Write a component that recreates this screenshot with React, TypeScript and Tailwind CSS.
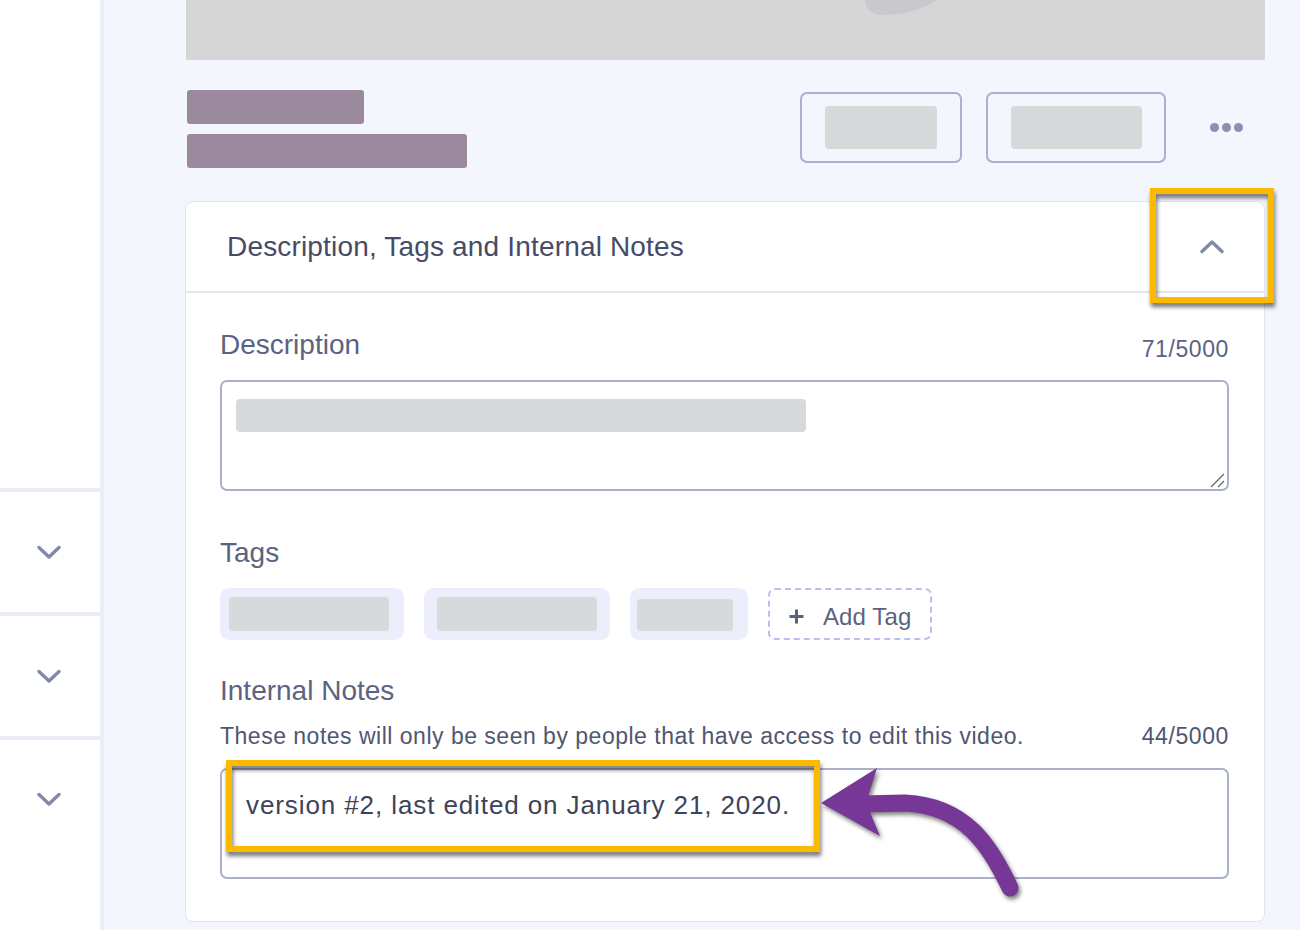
import React from "react";

function Chevron({ up = false }: { up?: boolean }) {
  return (
    <svg width="24" height="15" viewBox="0 0 24 15" fill="none">
      <polyline
        points={up ? "2,12.5 12,3 22,12.5" : "2,2.5 12,12 22,2.5"}
        stroke="#8189ab"
        strokeWidth="3.4"
        strokeLinecap="round"
        strokeLinejoin="round"
      />
    </svg>
  );
}

function Sidebar() {
  return (
    <div className="w-[104px] shrink-0 bg-[#e9eef7] pr-[4px] flex flex-col gap-[4px]">
      <div className="h-[488px] bg-white" />
      <div className="h-[120px] bg-white flex items-center justify-center pr-[3px]">
        <Chevron />
      </div>
      <div className="h-[120px] bg-white flex items-center justify-center pr-[3px]">
        <Chevron />
      </div>
      <div className="flex-1 bg-white flex justify-center pt-[52px] pr-[3px]">
        <Chevron />
      </div>
    </div>
  );
}

function GreyBar({ w, h = 34 }: { w: number; h?: number }) {
  return <div className="bg-[#d8d9db] rounded-[4px]" style={{ width: w, height: h }} />;
}

export default function App() {
  return (
    <div className="relative w-[1300px] h-[930px] overflow-hidden flex bg-[#f3f6fd] font-['Liberation_Sans',Arial,sans-serif]">
      <Sidebar />

      <main className="flex-1 pl-[81px] pr-[35px]">
        {/* video preview */}
        <div className="relative ml-px h-[60px] bg-[#d6d6d6]">
          <svg className="absolute left-[679px] top-0" width="72" height="16" viewBox="0 0 72 16">
            <path d="M0 0 L72 0 C60 8 42 15 18 15 C5 15 1 8 0 0 Z" fill="#c9c8cc" />
          </svg>
        </div>

        {/* title + actions */}
        <div className="mt-[30px] flex items-center">
          <div className="flex flex-col gap-[10px] pl-[2px]">
            <div className="w-[177px] h-[34px] rounded-[3px] bg-[#9b8a9e]" />
            <div className="w-[280px] h-[34px] rounded-[3px] bg-[#9b8a9e]" />
          </div>
          <div className="ml-auto flex items-center gap-[24px] -mt-[3px] -mr-px">
            <button className="w-[162px] h-[71px] border-2 border-[#a9b1cb] rounded-[7px] flex items-center justify-center">
              <GreyBar w={112} h={43} />
            </button>
            <button className="w-[180px] h-[71px] border-2 border-[#a9b1cb] rounded-[7px] flex items-center justify-center">
              <GreyBar w={131} h={43} />
            </button>
          </div>
          <div className="ml-[45px] mr-[22px] flex gap-[3px] -mt-[3px]">
            <span className="w-[9px] h-[9px] rounded-full bg-[#8990b0]" />
            <span className="w-[9px] h-[9px] rounded-full bg-[#8990b0]" />
            <span className="w-[9px] h-[9px] rounded-full bg-[#8990b0]" />
          </div>
        </div>

        {/* accordion card */}
        <section className="mt-[33px] bg-white border border-[#e1e4ea] rounded-[8px]">
          <div className="h-[91px] border-b-2 border-[#e5e7ec] flex items-center pl-[41px] pr-[40px]">
            <h2 className="text-[28px] leading-[34px] tracking-[0.17px] text-[#464c67]">Description, Tags and Internal Notes</h2>
            <div className="ml-auto">
              <Chevron up />
            </div>
          </div>

          <div className="pl-[34px] pr-[35px] pt-[35px] pb-[42px]">
            <div className="flex items-end justify-between h-[34px]">
              <label className="text-[28px] leading-[34px] text-[#5b6382]">Description</label>
              <span className="text-[23px] leading-[28px] tracking-[0.6px] text-[#5b6382] -mb-[1px]">71/5000</span>
            </div>
            <div className="relative mt-[18px] h-[111px] border-2 border-[#a9b1cb] rounded-[7px] pl-[14px] pt-[17px]">
              <div className="w-[570px] h-[33px] rounded-[4px] bg-[#d8d9db]" />
              <svg className="absolute right-[2px] bottom-[1px]" width="16" height="16" viewBox="0 0 16 16">
                <line x1="2" y1="15" x2="15" y2="2" stroke="#666" strokeWidth="1.3" />
                <line x1="9" y1="15" x2="15" y2="9" stroke="#666" strokeWidth="1.3" />
              </svg>
            </div>

            <label className="block mt-[45px] text-[28px] leading-[34px] text-[#5b6382]">Tags</label>
            <div className="mt-[18px] flex gap-[20px]">
              <div className="w-[184px] h-[52px] rounded-[9px] bg-[#eceefc] flex items-center pl-[9px]">
                <GreyBar w={160} />
              </div>
              <div className="w-[186px] h-[52px] rounded-[9px] bg-[#eceefc] flex items-center pl-[13px]">
                <GreyBar w={160} />
              </div>
              <div className="w-[118px] h-[52px] rounded-[9px] bg-[#eceefc] flex items-center pl-[7px] pt-[2px]">
                <GreyBar w={96} h={32} />
              </div>
              <button className="w-[164px] h-[52px] rounded-[7px] border-2 border-dashed border-[#b9bdf4] flex items-center pl-[18px] pt-[5px] text-[#5b6280]">
                <svg width="17" height="17" viewBox="0 0 17 17">
                  <path d="M8.5 1.5 V15.5 M1.5 8.5 H15.5" stroke="#5b6280" strokeWidth="3" />
                </svg>
                <span className="ml-[18px] text-[24px] leading-[30px] tracking-[0.1px]">Add Tag</span>
              </button>
            </div>

            <label className="block mt-[34px] text-[28px] leading-[34px] text-[#5b6382]">Internal Notes</label>
            <div className="mt-[14px] flex items-baseline justify-between">
              <p className="text-[23px] leading-[28px] tracking-[0.5px] text-[#4f566f]">
                These notes will only be seen by people that have access to edit this video.
              </p>
              <span className="text-[23px] leading-[28px] tracking-[0.6px] text-[#4f566f]">44/5000</span>
            </div>
            <div className="mt-[18px] h-[111px] border-2 border-[#a9b1cb] rounded-[7px] pl-[24px] pt-[19px]">
              <p className="text-[26px] leading-[32px] tracking-[0.9px] text-[#3d4358]">
                version #2, last edited on January 21, 2020.
              </p>
            </div>
          </div>
        </section>
      </main>

      {/* annotation overlays */}
      <div className="absolute left-[1150px] top-[188px] w-[124px] h-[115px] border-[6px] border-[#fbb900] [filter:drop-shadow(1px_4px_2px_rgba(0,0,0,0.55))]" />
      <div className="absolute left-[226px] top-[760px] w-[594px] h-[92px] border-[6px] border-[#fbb900] [filter:drop-shadow(1px_4px_2px_rgba(0,0,0,0.55))]" />
      <svg
        className="absolute left-0 top-0 pointer-events-none [filter:drop-shadow(2px_3px_2px_rgba(0,0,0,0.5))]"
        width="1300"
        height="930"
        viewBox="0 0 1300 930"
        fill="none"
      >
        <path d="M1010 888 C990 845 965 806 905 803 L862 804" stroke="#773797" strokeWidth="17" strokeLinecap="round" />
        <polygon points="821,803 877,768 866,803 880,836" fill="#773797" />
      </svg>
    </div>
  );
}
